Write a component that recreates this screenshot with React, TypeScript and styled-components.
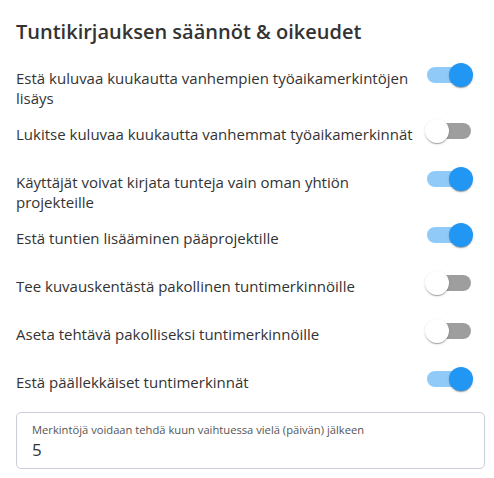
import React, { useState } from 'react'
import styled, { createGlobalStyle } from 'styled-components'

const GlobalStyle = createGlobalStyle`
   body {
      margin: 0;
      background: #ffffff;
      font-family: 'Open Sans', 'Noto Sans', sans-serif;
      color: #333333;
   }
`

const Page = styled.div`
   padding: 19px 9px 0 16px;
   width: 494px;
   box-sizing: border-box;
`

const Heading = styled.h1`
   margin: 0 0 11px;
   font-size: 20px;
   line-height: 26px;
   font-weight: 600;
   color: #333333;
`

const Row = styled.div`
   display: grid;
   grid-template-columns: 1fr 58px;
   align-items: start;
   min-height: 48px;
   padding: 0 7px 4px 0;
   box-sizing: border-box;
`

const Label = styled.div`
   padding-top: 12px;
   font-size: 15px;
   line-height: 20px;
   color: #333333;
`

const SwitchBox = styled.button`
   height: 38px;
   width: 58px;
   padding: 0;
   border: 0;
   background: none;
   display: flex;
   align-items: center;
   justify-content: center;
   cursor: pointer;
`

const Track = styled.span<{ $on: boolean }>`
   position: relative;
   display: block;
   width: 44px;
   height: 16px;
   border-radius: 8px;
   background: ${(props) => (props.$on ? '#90caf9' : '#9e9e9e')};
`

const Thumb = styled.span<{ $on: boolean }>`
   position: absolute;
   top: -4px;
   left: ${(props) => (props.$on ? '22px' : '-2px')};
   width: 24px;
   height: 24px;
   border-radius: 50%;
   background: ${(props) => (props.$on ? '#2196f3' : '#ffffff')};
   box-shadow: 0 2px 1px -1px rgba(0, 0, 0, 0.2), 0 1px 1px 0 rgba(0, 0, 0, 0.14),
      0 1px 3px 0 rgba(0, 0, 0, 0.12);
`

const Field = styled.div`
   margin-top: 4px;
   height: 57px;
   border: 1px solid #c9ced8;
   border-radius: 5px;
   padding: 9px 15px 0;
   box-sizing: border-box;
`

const FieldLabel = styled.div`
   font-size: 11.2px;
   line-height: 16px;
   color: #555555;
`

const FieldValue = styled.div`
   font-size: 17px;
   line-height: 24px;
   color: #333333;
`

const rules = [
   { text: 'Estä kuluvaa kuukautta vanhempien työaikamerkintöjen lisäys', on: true },
   { text: 'Lukitse kuluvaa kuukautta vanhemmat työaikamerkinnät', on: false },
   { text: 'Käyttäjät voivat kirjata tunteja vain oman yhtiön projekteille', on: true },
   { text: 'Estä tuntien lisääminen pääprojektille', on: true },
   { text: 'Tee kuvauskentästä pakollinen tuntimerkinnöille', on: false },
   { text: 'Aseta tehtävä pakolliseksi tuntimerkinnöille', on: false },
   { text: 'Estä päällekkäiset tuntimerkinnät', on: true },
]

export default function App() {
   const [values, setValues] = useState(rules.map((r) => r.on))

   const toggle = (i: number) =>
      setValues((prev) => prev.map((v, j) => (j === i ? !v : v)))

   return (
      <>
         <GlobalStyle />
         <Page>
            <Heading>Tuntikirjauksen säännöt &amp; oikeudet</Heading>
            {rules.map((rule, i) => (
               <Row key={i}>
                  <Label>{rule.text}</Label>
                  <SwitchBox onClick={() => toggle(i)}>
                     <Track $on={values[i]}>
                        <Thumb $on={values[i]} />
                     </Track>
                  </SwitchBox>
               </Row>
            ))}
            <Field>
               <FieldLabel>Merkintöjä voidaan tehdä kuun vaihtuessa vielä (päivän) jälkeen</FieldLabel>
               <FieldValue>5</FieldValue>
            </Field>
         </Page>
      </>
   )
}
